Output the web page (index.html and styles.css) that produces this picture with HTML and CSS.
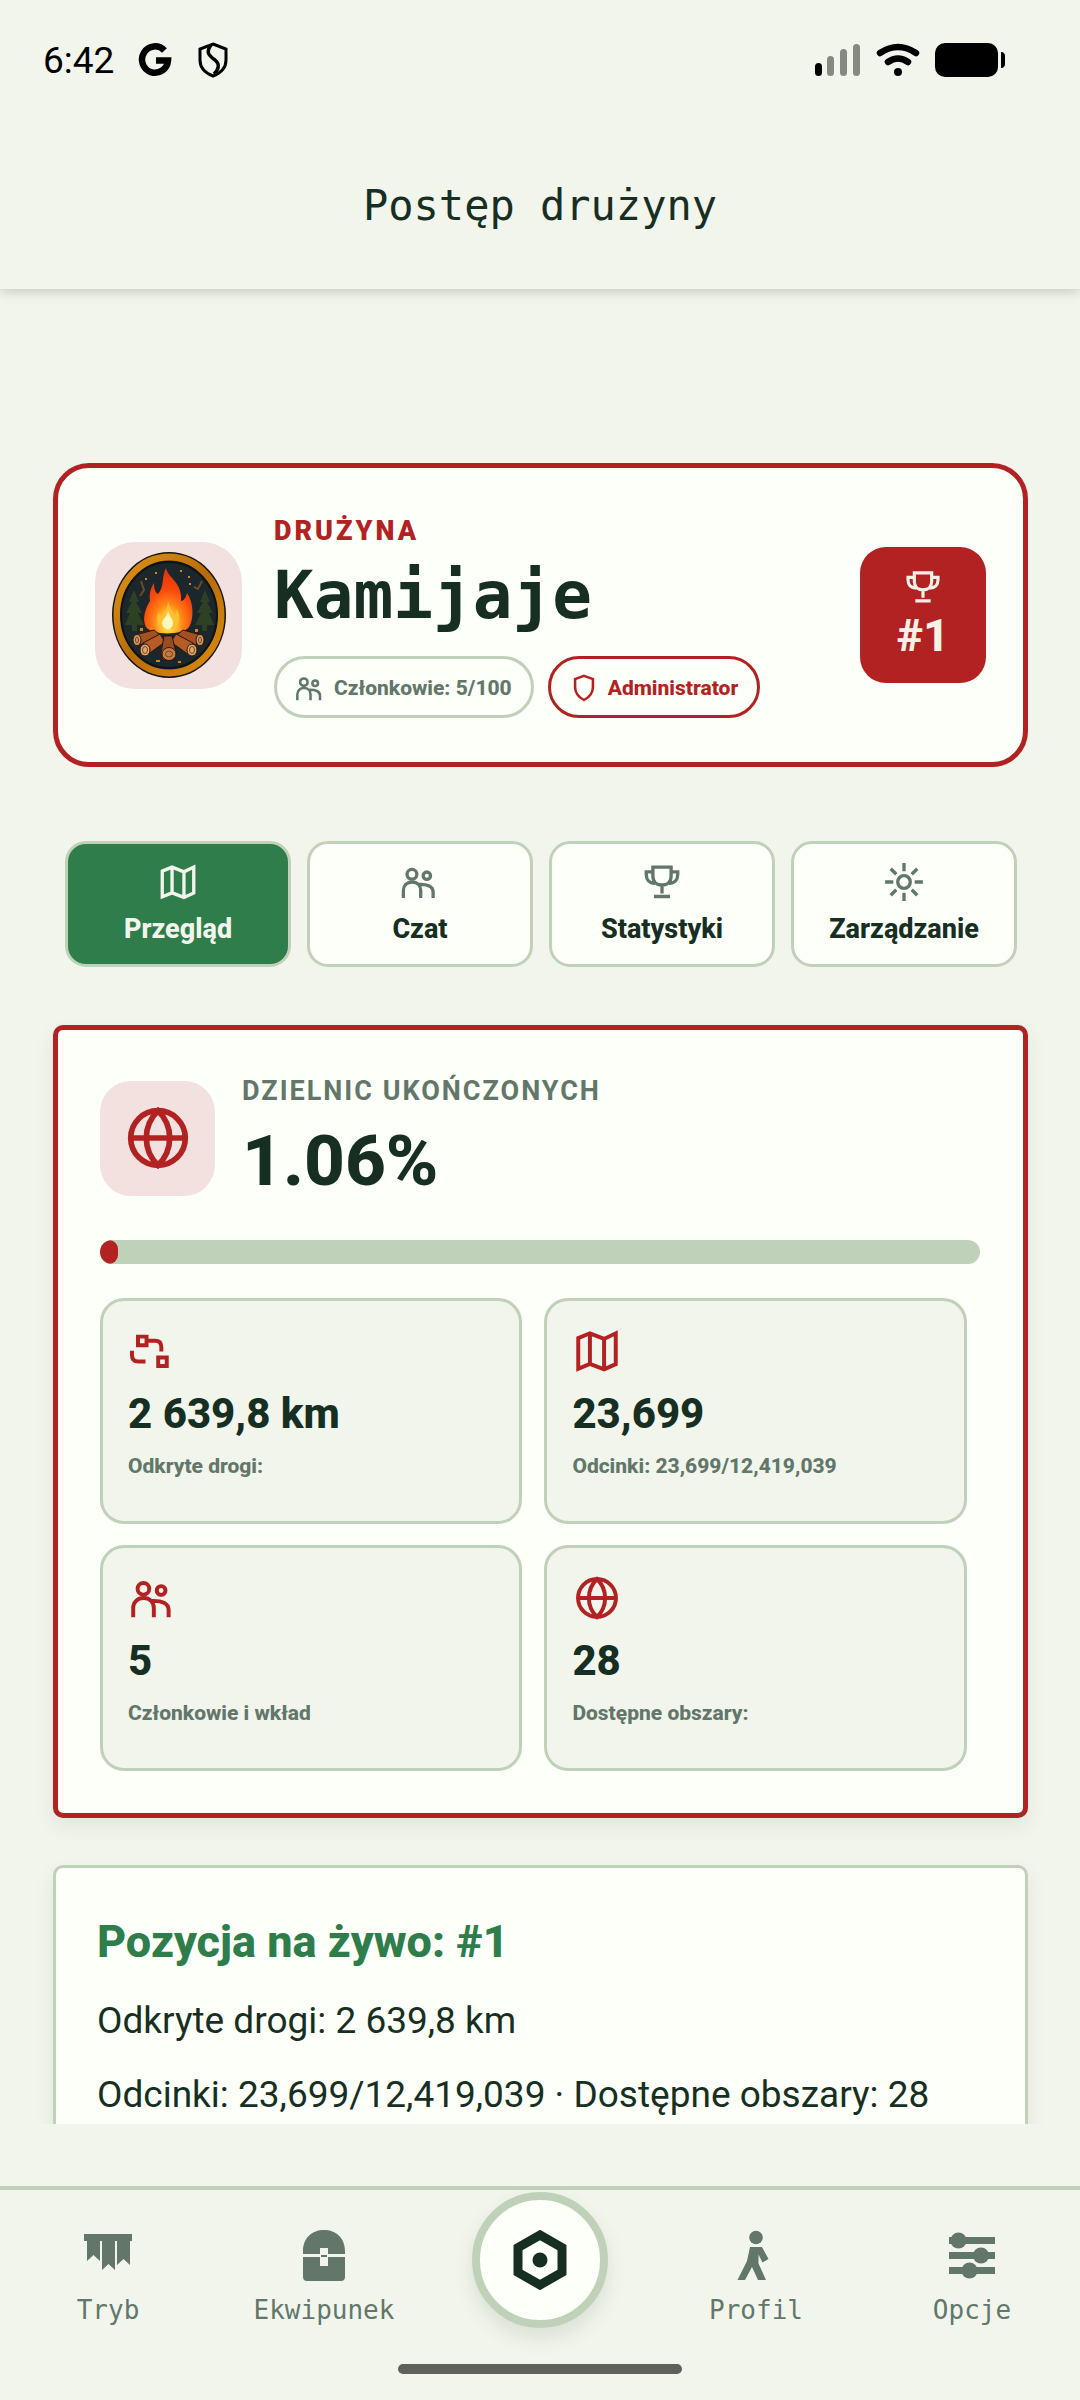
FILE: index.html
```html
<!DOCTYPE html>
<html lang="pl">
<head>
    <meta charset="UTF-8">
    <meta name="viewport" content="width=device-width, initial-scale=1.0">
    <title>Postęp drużyny</title>
    <link rel="stylesheet" href="styles.css">
</head>
<body>
    <!-- Wspólne ikony -->
    <svg class="sprite" aria-hidden="true">
        <symbol id="i-map" viewBox="0 0 24 24">
            <path d="M3 5.8l5.6-2.3 6.8 2.7L21 3.5v14.8l-5.6 2.5-6.8-2.6L3 20.5zM8.6 3.5v14.6M15.4 6.2v14.6"/>
        </symbol>
        <symbol id="i-people" viewBox="0 0 24 24">
            <circle cx="7.4" cy="7.6" r="2.8"/>
            <circle cx="15.9" cy="8.4" r="2.1"/>
            <path d="M2.5 21.2v-4.4c0-2.8 2-4.8 5-4.8s4.9 2 4.9 4.8v4.4M11.4 13.4c4.8-.2 8.1 1 8.1 4.4v3.4"/>
        </symbol>
        <symbol id="i-trophy" viewBox="0 0 24 24">
            <path d="M6.8 3.5h10.4v5.2c0 3-2 5-5.2 5s-5.2-2-5.2-5zM6.8 6.2H3v1.5c0 3 1.8 5 5 5M17.2 6.2H21v1.5c0 3-1.8 5-5 5M12 13.7v4.8M7.4 20.3h9.2"/>
        </symbol>
        <symbol id="i-shield" viewBox="0 0 24 24">
            <path d="M12 2.9l6.7 2.4v5.9c0 4.2-2.6 7.6-6.7 9.8-4.1-2.2-6.7-5.6-6.7-9.8V5.3z"/>
        </symbol>
        <symbol id="i-gear" viewBox="0 0 24 24">
            <circle cx="12" cy="12" r="3.6"/>
            <path d="M12 1.2v4.7M12 18.1v4.7M1.2 12h4.7M18.1 12h4.7M4.4 4.4l3.2 3.2M16.4 16.4l3.2 3.2M19.6 4.4l-3.2 3.2M7.6 16.4l-3.2 3.2"/>
        </symbol>
        <symbol id="i-globe" viewBox="0 0 24 24">
            <circle cx="12" cy="12" r="9.1"/>
            <path d="M2.9 12h18.2M12 2.9c5.2 5 5.2 13.2 0 18.2-5.2-5-5.2-13.2 0-18.2z"/>
        </symbol>
        <symbol id="i-route" viewBox="0 0 24 24">
            <path d="M4.8 5.1h4.1v4.1H4.8zM14.5 15.1h4.1v4.1h-4.1zM9 7.1h4c1.9 0 3 1.1 3 3v2.1M1.9 11.9V14c0 1.900 1.1 3 3 3h3.500"/>
        </symbol>
    </svg>

    <header class="header">
        <div class="status-bar">
            <div class="status-left">
                <span class="clock">6:42</span>
                <svg class="status-icon" viewBox="0 0 34 36" aria-hidden="true">
                    <path d="M26.5 8.500A13 13.200 0 1 0 30 18.500H18" fill="none" stroke="#000" stroke-width="6.500"/>
                </svg>
                <svg class="status-icon" viewBox="0 0 34 36" aria-hidden="true">
                    <path d="M17 2l13 5v11c0 8-5 13-13 16C9 31 4 26 4 18V7z" fill="none" stroke="#000" stroke-width="3"/>
                    <path d="M15 3c-5 7-3 10 4 15 5 4 4 9-1 14" fill="none" stroke="#000" stroke-width="3.500"/>
                </svg>
            </div>
            <div class="status-right">
                <svg class="signal" viewBox="0 0 46 34" aria-hidden="true">
                    <rect x="0" y="20" width="7" height="13" rx="3.500" fill="#000"/>
                    <rect x="12" y="13" width="7" height="20" rx="3.500" fill="#868882"/>
                    <rect x="25" y="6" width="7" height="27" rx="3.500" fill="#868882"/>
                    <rect x="38" y="1" width="7" height="32" rx="3.500" fill="#868882"/>
                </svg>
                <svg class="wifi" viewBox="0 0 44 34" aria-hidden="true">
                    <path d="M4 10Q22-2 40 10M12 19Q22 12 32 19" fill="none" stroke="#000" stroke-width="6.500" stroke-linecap="round"/>
                    <circle cx="22" cy="29" r="4"/>
                </svg>
                <svg class="battery" viewBox="0 0 72 34" aria-hidden="true">
                    <rect x="0" y="0" width="63" height="34" rx="10"/>
                    <path d="M66 9c3 0 4 2 4 4v8c0 2-1 4-4 4z"/>
                </svg>
            </div>
        </div>
        <h1>Postęp drużyny</h1>
    </header>

    <main class="content">
        <section class="team-card">
            <div class="avatar">
                <svg viewBox="0 0 114 126" aria-hidden="true">
                    <defs>
                        <radialGradient id="flame" cx="50%" cy="85%" r="80%">
                            <stop offset="0" stop-color="#fff6b0"/>
                            <stop offset=".15" stop-color="#ffd23c"/>
                            <stop offset=".38" stop-color="#ff8414"/>
                            <stop offset=".65" stop-color="#f84a0c"/>
                            <stop offset="1" stop-color="#e63208"/>
                        </radialGradient>
                        <linearGradient id="ring" x1="0" y1="0" x2="1" y2="1">
                            <stop offset="0" stop-color="#e09417"/>
                            <stop offset=".5" stop-color="#b86c08"/>
                            <stop offset="1" stop-color="#dc8c10"/>
                        </linearGradient>
                    </defs>
                    <ellipse cx="57" cy="63" rx="57" ry="63" fill="#17140f"/>
                    <ellipse cx="57" cy="63" rx="52" ry="58" fill="#1b272a" stroke="url(#ring)" stroke-width="7"/>
                    <ellipse cx="57" cy="63" rx="48" ry="53" fill="none" stroke="#0e1416" stroke-width="2"/>
                    <path d="M22 38l5 12h-3l6 11h-4l6 12h-7v6h-5v-6h-7l5-12h-4l6-11h-3zM93 38l5 12h-3l6 11h-4l5 12h-7v6h-5v-6h-7l6-12h-4l6-11h-3z" fill="#2f4124"/>
                    <path d="M29 29l3 9-4 6M90 29l-4 8-4-2" fill="none" stroke="#6b4a25" stroke-width="2"/>
                    <g fill="#d8801d">
                        <rect x="33" y="26" width="2" height="2"/>
                        <rect x="43" y="20" width="2" height="2"/>
                        <rect x="68" y="18" width="2" height="2"/>
                        <rect x="76" y="24" width="2" height="2"/>
                        <rect x="77" y="31" width="2" height="2"/>
                        <rect x="28" y="76" width="3" height="3"/>
                        <rect x="83" y="77" width="3" height="3"/>
                        <rect x="44" y="108" width="4" height="2"/>
                        <rect x="66" y="109" width="3" height="2"/>
                    </g>
                    <path d="M54 16c2 10 17 15 15 33 3 0 5-4 6-8 7 10 7 26 2 34-5 8-37 9-43 0-4-8-1-18 4-26-1-9 1-13 4-18 0 6 1 9 4 11 7-8 3-17 8-26z" fill="url(#flame)"/>
                    <path d="M56 48c1 8 5 11 6 16 2-2 2-4 3-7 4 8 2 16-3 20H50c-5-5-6-11-3-17 0 3 1 5 3 7 2-6 6-10 6-19z" fill="#ffbf2e"/>
                    <path d="M56 58c1 7 5 8 5 13 0 8-10 8-11 1 0-6 6-7 6-14z" fill="#fff8bd"/>
                    <g stroke="#2e160b" stroke-width="1">
                        <path d="M23 83l19-5 6 5-20 10zM89 83l-18-5-6 5 19 10z" fill="#a4501f"/>
                        <path d="M31 91l17-9 5 8-18 13zM81 91l-17-9-5 8 18 13z" fill="#b65d26"/>
                        <path d="M52 84h8l4 17-2 7H51l-2-7z" fill="#9c4a1f"/>
                        <ellipse cx="25" cy="88" rx="4" ry="5.500" fill="#d39a62"/>
                        <ellipse cx="88" cy="88" rx="4" ry="5.500" fill="#d39a62"/>
                        <ellipse cx="33" cy="98" rx="5" ry="6" fill="#dca66d"/>
                        <ellipse cx="80" cy="98" rx="5" ry="6" fill="#dca66d"/>
                        <ellipse cx="57" cy="102" rx="7" ry="6.500" fill="#c27a43"/>
                    </g>
                    <g fill="none" stroke="#7a4522" stroke-width="1">
                        <ellipse cx="33" cy="98" rx="2.500" ry="3.500"/>
                        <ellipse cx="80" cy="98" rx="2.500" ry="3.500"/>
                        <ellipse cx="57" cy="102" rx="3.500" ry="3"/>
                        <ellipse cx="25" cy="88" rx="1.500" ry="3"/>
                        <ellipse cx="88" cy="88" rx="1.500" ry="3"/>
                    </g>
                </svg>
            </div>
            <div class="team-info">
                <p class="eyebrow">DRUŻYNA</p>
                <h2 class="team-name">Kamijaje</h2>
                <div class="pills">
                    <span class="pill"><svg class="icon" aria-hidden="true"><use href="#i-people"/></svg>Członkowie: 5/100</span>
                    <span class="pill pill-red"><svg class="icon" aria-hidden="true"><use href="#i-shield"/></svg>Administrator</span>
                </div>
            </div>
            <div class="rank">
                <svg class="icon" aria-hidden="true"><use href="#i-trophy"/></svg>
                <strong>#1</strong>
            </div>
        </section>

        <div class="tabs">
            <button type="button" class="tab active"><svg class="icon" aria-hidden="true"><use href="#i-map"/></svg>Przegląd</button>
            <button type="button" class="tab"><svg class="icon" aria-hidden="true"><use href="#i-people"/></svg>Czat</button>
            <button type="button" class="tab"><svg class="icon" aria-hidden="true"><use href="#i-trophy"/></svg>Statystyki</button>
            <button type="button" class="tab"><svg class="icon" aria-hidden="true"><use href="#i-gear"/></svg>Zarządzanie</button>
        </div>

        <section class="progress-card">
            <div class="progress-head">
                <div class="progress-icon">
                    <svg class="icon" aria-hidden="true"><use href="#i-globe"/></svg>
                </div>
                <div>
                    <p class="progress-label">DZIELNIC UKOŃCZONYCH</p>
                    <p class="progress-value">1.06%</p>
                </div>
            </div>
            <div class="bar">
                <div class="bar-fill" style="width: 2%"></div>
            </div>
            <div class="stats">
                <div class="stat">
                    <svg class="icon" aria-hidden="true"><use href="#i-route"/></svg>
                    <p class="stat-value">2 639,8 km</p>
                    <p class="stat-label">Odkryte drogi:</p>
                </div>
                <div class="stat">
                    <svg class="icon" aria-hidden="true"><use href="#i-map"/></svg>
                    <p class="stat-value">23,699</p>
                    <p class="stat-label">Odcinki: 23,699/12,419,039</p>
                </div>
                <div class="stat">
                    <svg class="icon" aria-hidden="true"><use href="#i-people"/></svg>
                    <p class="stat-value">5</p>
                    <p class="stat-label">Członkowie i wkład</p>
                </div>
                <div class="stat">
                    <svg class="icon" aria-hidden="true"><use href="#i-globe"/></svg>
                    <p class="stat-value">28</p>
                    <p class="stat-label">Dostępne obszary:</p>
                </div>
            </div>
        </section>

        <section class="live-card">
            <h3>Pozycja na żywo: #1</h3>
            <p>Odkryte drogi: 2 639,8 km</p>
            <p>Odcinki: 23,699/12,419,039 · Dostępne obszary: 28</p>
        </section>
    </main>

    <nav class="bottom-nav">
        <div class="nav-items">
            <a href="#tryb" class="nav-item">
                <svg viewBox="0 0 52 52" aria-hidden="true">
                    <path d="M2 4h48v7H2zM5 11h13v20l-6.500-6L5 31zM20 11h13v29l-6.500-6-6.500 6zM35 11h13v24l-6.500-6-6.500 6z"/>
                </svg>
                Tryb
            </a>
            <a href="#ekwipunek" class="nav-item">
                <svg viewBox="0 0 52 52" aria-hidden="true">
                    <path d="M5 24v-3C5 8 14 0 26 0s21 8 21 21v3H30v-6h-8v6zM5 27h17v9h8v-9h17v20q0 4-4 4H9q-4 0-4-4zM23 25h6v2h-6z"/>
                </svg>
                Ekwipunek
            </a>
            <a href="#mapa" class="nav-main" aria-label="Mapa">
                <svg viewBox="0 0 54 60" aria-hidden="true">
                    <path d="M27 5l22 12.500v25L27 55 5 42.500v-25z" fill="none" stroke="currentColor" stroke-width="9"/>
                    <circle cx="27" cy="30" r="7.500"/>
                </svg>
            </a>
            <a href="#profil" class="nav-item">
                <svg viewBox="0 0 52 52" aria-hidden="true">
                    <circle cx="26" cy="7.500" r="6.800"/>
                    <path d="M20 17h12l6.500 12-6 3.500-4-8v9L36 50h-8l-6-13-7 13H7.500l9.500-19z"/>
                </svg>
                Profil
            </a>
            <a href="#opcje" class="nav-item">
                <svg viewBox="0 0 52 52" aria-hidden="true">
                    <path d="M3 7h46v7H3zM3 22h46v7H3zM3 37h46v7H3z"/>
                    <circle cx="12.500" cy="10.500" r="8"/>
                    <circle cx="35" cy="25.500" r="8"/>
                    <circle cx="23.500" cy="40.500" r="8"/>
                </svg>
                Opcje
            </a>
        </div>
        <div class="home-indicator"></div>
    </nav>
</body>
</html>
```

FILE: styles.css
```css
* {
    margin: 0;
    padding: 0;
    box-sizing: border-box;
}

body {
    display: flex;
    flex-direction: column;
    height: 100vh;
    font-family: Roboto, sans-serif;
    background: #f2f5ec;
    color: #172f23;
}

.sprite {
    display: none;
}

.icon {
    display: block;
    flex-shrink: 0;
    fill: none;
    stroke: currentColor;
    stroke-width: 1.9;
}

/* Nagłówek z paskiem stanu */
.header {
    height: 289px;
    text-align: center;
    box-shadow: 0 2px 12px rgba(0, 0, 0, 0.2);
}

.status-bar {
    display: flex;
    justify-content: space-between;
    align-items: center;
    height: 120px;
    margin-bottom: 58px;
    padding: 0 73px 0 43px;
    color: #000;
}

.status-left, .status-right {
    display: flex;
    align-items: center;
}

.status-left {
    gap: 24px;
}

.status-right {
    gap: 15px;
}

.clock {
    font-size: 37px;
}

.status-icon {
    width: 34px;
    height: 36px;
}

.signal {
    width: 46px;
    height: 34px;
}

.wifi {
    width: 44px;
    height: 34px;
}

.battery {
    width: 72px;
    height: 34px;
}

.header h1 {
    font-family: "DejaVu Sans Mono", monospace;
    font-size: 42px;
    font-weight: normal;
    line-height: 56px;
}

.content {
    flex: 1;
    min-height: 0;
    overflow: hidden;
    margin-top: 16px;
    margin-bottom: 62px;
    padding: 158px 52px 0 53px;
}

/* Karta drużyny */
.team-card {
    display: flex;
    align-items: center;
    padding: 44px 37px;
    background: #fdfff9;
    border: 5px solid #b22222;
    border-radius: 36px;
}

.avatar {
    display: flex;
    align-items: center;
    justify-content: center;
    width: 147px;
    height: 147px;
    margin-right: 32px;
    background: #f3e1df;
    border-radius: 40px;
}

.avatar svg {
    width: 114px;
    height: 126px;
}

.team-info {
    flex: 1;
}

.eyebrow {
    color: #b22222;
    font-size: 27px;
    font-weight: 900;
    line-height: 38px;
    letter-spacing: 3px;
}

.team-name {
    margin: 6px 0 20px;
    font-family: "DejaVu Sans Mono", monospace;
    font-size: 66px;
    line-height: 80px;
}

.pills {
    display: flex;
    gap: 14px;
}

.pill {
    display: flex;
    align-items: center;
    gap: 8px;
    height: 62px;
    padding: 2px 19px 0 17px;
    border: 3px solid #c0d1b9;
    border-radius: 31px;
    color: #62776a;
    font-size: 21px;
    font-weight: 800;
}

.pill .icon {
    width: 32px;
    height: 32px;
}

.pill-red {
    border-color: #b22222;
    color: #b22222;
}

.rank {
    display: flex;
    flex-direction: column;
    align-items: center;
    width: 126px;
    padding: 20px 0 18px;
    background: #b22222;
    border-radius: 26px;
    color: #f5f1e8;
}

.rank .icon {
    width: 40px;
    height: 40px;
}

.rank strong {
    font-size: 45px;
    font-weight: 800;
    line-height: 58px;
}

/* Zakładki */
.tabs {
    display: grid;
    grid-template-columns: repeat(4, 1fr);
    gap: 16px;
    margin: 74px 11px 58px 12px;
}

.tab {
    display: flex;
    flex-direction: column;
    align-items: center;
    gap: 8px;
    height: 126px;
    padding-top: 17px;
    background: #fdfff9;
    border: 3px solid #c0d1b9;
    border-radius: 21px;
    color: #172f23;
    font-family: inherit;
    font-size: 27px;
    font-weight: 800;
    line-height: 36px;
}

.tab .icon {
    width: 42px;
    height: 42px;
    color: #62776a;
}

.tab.active {
    background: #2e7d4b;
    color: #f2f5ec;
}

.tab.active .icon {
    color: #f2f5ec;
}

/* Karta postępu */
.progress-card {
    padding: 43px 43px 42px 42px;
    background: #fdfff9;
    border: 5px solid #b22222;
    border-radius: 10px;
    box-shadow: 0 8px 20px rgba(23, 47, 35, 0.08);
}

.progress-head {
    display: flex;
    align-items: center;
    gap: 27px;
}

.progress-icon {
    display: flex;
    align-items: center;
    justify-content: center;
    width: 115px;
    height: 115px;
    background: #f3e1df;
    border-radius: 31px;
    color: #b22222;
}

.progress-icon .icon {
    width: 72px;
    height: 72px;
}

.progress-label {
    color: #62776a;
    font-size: 27px;
    font-weight: 700;
    line-height: 36px;
    letter-spacing: 2px;
}

.progress-value {
    margin-top: 10px;
    font-size: 71px;
    font-weight: 800;
    line-height: 84px;
}

.bar {
    height: 24px;
    margin: 37px 0 34px;
    overflow: hidden;
    background: #c0d1b9;
    border-radius: 12px;
}

.bar-fill {
    height: 100%;
    background: #b22222;
    border-radius: 12px;
}

.stats {
    display: grid;
    grid-template-columns: 48% 48%;
    gap: 21px 22px;
}

.stat {
    height: 226px;
    padding: 25px;
    background: #f2f5ec;
    border: 3px solid #c0d1b9;
    border-radius: 24px;
}

.stat .icon {
    width: 50px;
    height: 50px;
    color: #b22222;
}

.stat-value {
    margin-top: 12px;
    font-size: 42px;
    font-weight: 800;
    line-height: 52px;
}

.stat-label {
    margin-top: 12px;
    color: #62776a;
    font-size: 21px;
    font-weight: 800;
    line-height: 28px;
}

/* Pozycja na żywo */
.live-card {
    display: flex;
    flex-direction: column;
    gap: 24px;
    margin-top: 47px;
    padding: 44px 41px;
    background: #fdfff9;
    border: 3px solid #c0d1b9;
    border-radius: 10px;
    box-shadow: 0 8px 20px rgba(23, 47, 35, 0.08);
}

.live-card h3 {
    color: #2e7d4b;
    font-size: 45px;
    font-weight: 800;
    line-height: 60px;
}

.live-card p {
    font-size: 37px;
    line-height: 50px;
}

/* Dolna nawigacja */
.bottom-nav {
    padding: 2px 0 26px;
    border-top: 4px solid #c0d1b9;
}

.nav-items {
    display: grid;
    grid-template-columns: repeat(5, 1fr);
    justify-items: center;
}

.nav-item {
    display: flex;
    flex-direction: column;
    align-items: center;
    gap: 10px;
    padding-top: 38px;
    color: #62776a;
    font-family: "DejaVu Sans Mono", monospace;
    font-size: 26px;
    line-height: 36px;
    text-decoration: none;
}

.nav-item svg {
    width: 52px;
    height: 52px;
    fill: currentColor;
}

.nav-main {
    display: flex;
    align-items: center;
    justify-content: center;
    width: 136px;
    height: 136px;
    background: #fdfff9;
    border: 8px solid #c0d1b9;
    border-radius: 50%;
    box-shadow: 0 10px 20px rgba(46, 80, 40, 0.12);
    color: #172f23;
}

.nav-main svg {
    width: 54px;
    height: 60px;
    fill: currentColor;
}

.home-indicator {
    width: 284px;
    height: 10px;
    margin: 36px auto 0;
    background: #5f605b;
    border-radius: 5px;
}
```
